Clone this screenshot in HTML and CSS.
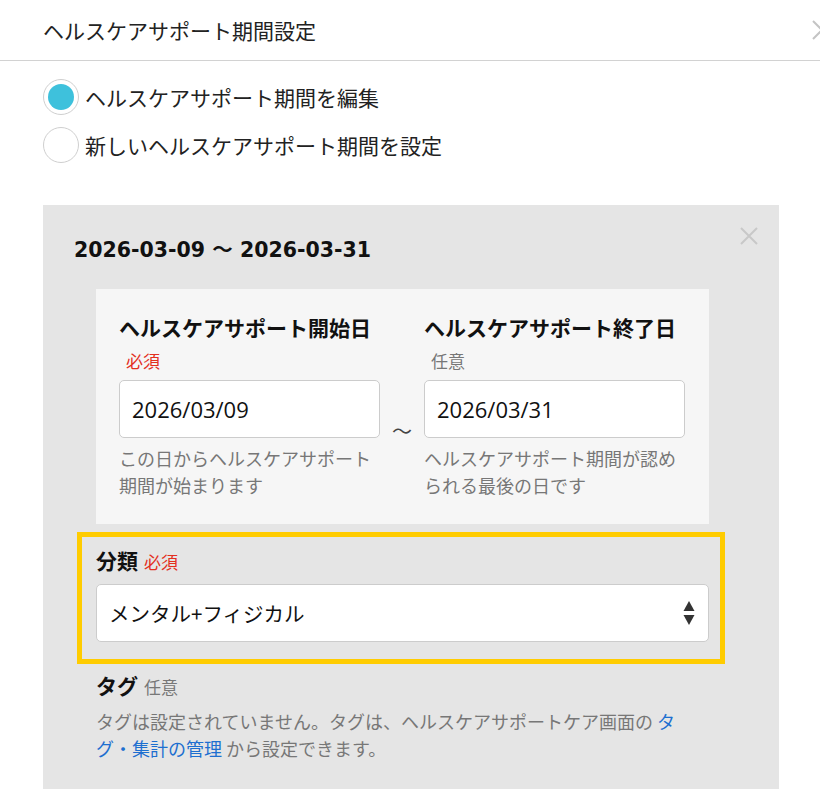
FILE: index.html
```html
<!DOCTYPE html>
<html lang="ja">
<head>
  <meta charset="UTF-8">
  <meta name="viewport" content="width=device-width, initial-scale=1.0">
  <title>ヘルスケアサポート期間設定</title>
  <link rel="stylesheet" href="styles.css">
</head>
<body>
  <div class="modal">
    <div class="modal-header">
      <h2>ヘルスケアサポート期間設定</h2>
      <svg class="modal-close" width="22" height="22" viewBox="0 0 22 22">
        <path d="M2 2 L20 20 M20 2 L2 20" stroke="#c4c4c4" stroke-width="2" fill="none"/>
      </svg>
    </div>

    <div class="modal-body">
      <div class="radio-group">
        <label class="radio">
          <input type="radio" name="mode" value="edit" checked>
          <span class="radio-mark"></span>
          ヘルスケアサポート期間を編集
        </label>
        <label class="radio">
          <input type="radio" name="mode" value="new">
          <span class="radio-mark"></span>
          新しいヘルスケアサポート期間を設定
        </label>
      </div>

      <div class="period">
        <div class="period-head">
          <h3>2026-03-09 ～ 2026-03-31</h3>
          <svg class="period-remove" width="20" height="20" viewBox="0 0 20 20">
            <path d="M2 2 L18 18 M18 2 L2 18" stroke="#c8c8c8" stroke-width="2" fill="none"/>
          </svg>
        </div>

        <div class="dates">
          <div class="date-col">
            <div class="field-label">ヘルスケアサポート開始日</div>
            <div class="required">必須</div>
            <input class="text-input" type="text" value="2026/03/09">
            <p class="help">この日からヘルスケアサポート期間が始まります</p>
          </div>
          <div class="date-sep">～</div>
          <div class="date-col">
            <div class="field-label">ヘルスケアサポート終了日</div>
            <div class="optional">任意</div>
            <input class="text-input" type="text" value="2026/03/31">
            <p class="help">ヘルスケアサポート期間が認められる最後の日です</p>
          </div>
        </div>

        <div class="category">
          <div class="inline-label">
            <span class="field-label">分類</span>
            <span class="required">必須</span>
          </div>
          <div class="select-wrap">
            <select class="select">
              <option>メンタル+フィジカル</option>
              <option>メンタル</option>
              <option>フィジカル</option>
            </select>
            <svg class="select-arrows" width="12" height="26" viewBox="0 0 12 26">
              <path d="M6 1 L11.5 11 L0.5 11 Z" fill="#333"/>
              <path d="M0.5 15 L11.5 15 L6 25 Z" fill="#333"/>
            </svg>
          </div>
        </div>

        <div class="tags">
          <div class="inline-label">
            <span class="field-label">タグ</span>
            <span class="optional">任意</span>
          </div>
          <p class="help">タグは設定されていません。タグは、ヘルスケアサポートケア画面の <a href="#">タグ・集計の管理</a> から設定できます。</p>
        </div>
      </div>
    </div>
  </div>
</body>
</html>
```

FILE: styles.css
```css
body {
  margin: 0;
  background-color: #ffffff;
  color: #222222;
  font-family: "Noto Sans CJK JP", "Noto Sans", sans-serif;
  overflow: hidden;
}

.modal {
  width: 820px;
}

.modal-header {
  display: flex;
  justify-content: space-between;
  align-items: center;
  height: 60px;
  padding-left: 43px;
  border-bottom: 1px solid #d2d2d2;
}

.modal-header h2 {
  margin: 0;
  font-size: 21px;
  font-weight: normal;
  line-height: 1;
  color: #222222;
}

.modal-close {
  margin-right: -13px;
}

.modal-body {
  padding: 18px 0 0 43px;
}

.radio-group {
  display: flex;
  flex-direction: column;
  gap: 12px;
}

.radio {
  display: flex;
  align-items: center;
  gap: 6px;
  font-size: 21px;
  line-height: 36px;
  cursor: pointer;
}

.radio input {
  display: none;
}

.radio-mark {
  display: flex;
  justify-content: center;
  align-items: center;
  width: 36px;
  height: 36px;
  box-sizing: border-box;
  border: 1px solid #cfcfcf;
  border-radius: 50%;
  background-color: #ffffff;
}

.radio input:checked + .radio-mark::after {
  content: "";
  width: 26px;
  height: 26px;
  border-radius: 50%;
  background-color: #3ec1dc;
}

.period {
  width: 736px;
  margin-top: 42px;
  padding-bottom: 30px;
  background-color: #e5e5e5;
}

.period-head {
  display: flex;
  justify-content: space-between;
  align-items: flex-start;
  padding: 21px 20px 0 31px;
}

.period-head h3 {
  margin: 0;
  padding-top: 11px;
  font-family: "DejaVu Sans", "Noto Sans CJK JP", sans-serif;
  font-size: 20.5px;
  font-weight: bold;
  line-height: 26px;
  color: #111111;
}

.dates {
  display: flex;
  width: 613px;
  box-sizing: border-box;
  margin: 26px 0 0 53px;
  padding: 23px 24px 25px 23px;
  background-color: #f6f6f6;
}

.date-col {
  width: 261px;
}

.date-sep {
  width: 44px;
  padding-top: 104px;
  text-align: center;
  font-size: 20px;
  color: #444444;
}

.field-label {
  font-size: 21px;
  font-weight: bold;
  line-height: 30px;
  color: #111111;
}

.required,
.optional {
  font-size: 17px;
  line-height: 30px;
}

.required {
  color: #e3301f;
}

.optional {
  color: #777777;
}

.date-col .required,
.date-col .optional {
  margin: 4px 0 4px 7px;
}

.text-input {
  display: block;
  width: 100%;
  height: 58px;
  box-sizing: border-box;
  padding: 0 12px;
  border: 1px solid #cccccc;
  border-radius: 5px;
  background-color: #ffffff;
  font-family: "Open Sans", "Noto Sans CJK JP", sans-serif;
  font-size: 22px;
  color: #111111;
}

.help {
  margin: 7px 0 0;
  font-size: 18px;
  line-height: 27px;
  color: #777777;
}

.help a {
  color: #1d6fd0;
  text-decoration: none;
}

.category {
  width: 648px;
  box-sizing: border-box;
  margin: 8px 0 0 34px;
  padding: 8px 11px 17px 14px;
  border: 5px solid #ffcc00;
}

.inline-label {
  display: flex;
  align-items: baseline;
  gap: 6px;
}

.select-wrap {
  position: relative;
  margin-top: 7px;
}

.select {
  display: block;
  width: 100%;
  height: 58px;
  box-sizing: border-box;
  padding: 0 12px;
  border: 1px solid #cccccc;
  border-radius: 5px;
  background-color: #ffffff;
  font-family: inherit;
  font-size: 20.5px;
  color: #111111;
  appearance: none;
  -webkit-appearance: none;
}

.select-arrows {
  position: absolute;
  top: 16px;
  right: 14px;
  pointer-events: none;
}

.tags {
  width: 613px;
  margin: 6px 0 0 53px;
}

.tags .help {
  margin-top: 6px;
}
```
